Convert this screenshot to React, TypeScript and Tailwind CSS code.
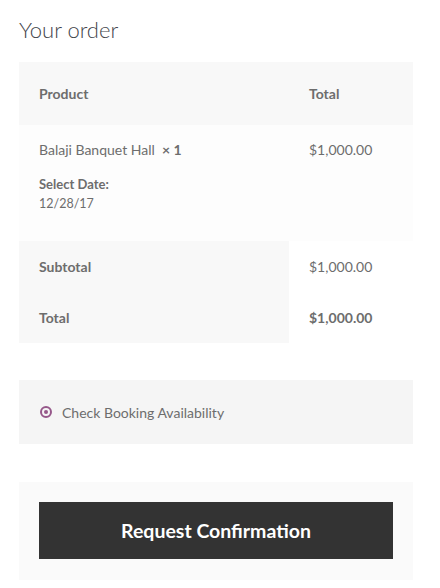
import React from "react";

export default function App() {
  const font = { fontFamily: '"Lato", "Noto Sans", sans-serif' };
  return (
    <div className="min-h-[588px] bg-white px-[19px] pt-[14px] text-[#6d6d6d]" style={font}>
      <h3 className="text-[22px] font-light leading-[32px] text-[#43454b]">Your order</h3>
      <div className="mt-[16px] w-[394px]">
        <div className="flex h-[63px] items-center bg-[#f8f8f8] text-[14px] font-bold">
          <div className="w-[270px] pl-[20px]">Product</div>
          <div className="pl-[20px]">Total</div>
        </div>
        <div className="flex h-[116px] bg-[#fdfdfd] text-[14px]">
          <div className="w-[270px] pl-[20px] pt-[14px]">
            <div className="leading-[22px]">
              Balaji Banquet Hall&nbsp; <span className="font-bold">× 1</span>
            </div>
            <div className="mt-[13px] text-[13px] font-bold leading-[20px]">Select Date:</div>
            <div className="text-[12.5px] leading-[20px]">12/28/17</div>
          </div>
          <div className="pl-[20px] pt-[14px] leading-[22px]">$1,000.00</div>
        </div>
        <div className="flex h-[51px] items-center text-[14px]">
          <div className="flex h-full w-[270px] items-center bg-[#f8f8f8] pl-[20px] font-bold">Subtotal</div>
          <div className="pl-[20px]">$1,000.00</div>
        </div>
        <div className="flex h-[51px] items-center text-[14px]">
          <div className="flex h-full w-[270px] items-center bg-[#f8f8f8] pl-[20px] font-bold">Total</div>
          <div className="pl-[20px] font-bold">$1,000.00</div>
        </div>
      </div>
      <div className="mt-[37px] flex h-[64px] w-[394px] items-center bg-[#f5f5f5] pl-[21px] text-[14px]">
        <span className="flex h-[12px] w-[12px] items-center justify-center rounded-full border-[2px] border-[#96588a]">
          <span className="h-[4px] w-[4px] rounded-full bg-[#96588a]" />
        </span>
        <span className="ml-[10px]">Check Booking Availability</span>
      </div>
      <div className="mt-[38px] w-[394px] bg-[#fafafa] p-[20px] pb-[21px]">
        <button className="flex h-[57px] w-full items-center justify-center bg-[#333333] text-[19.5px] font-bold text-white">
          Request Confirmation
        </button>
      </div>
    </div>
  );
}
